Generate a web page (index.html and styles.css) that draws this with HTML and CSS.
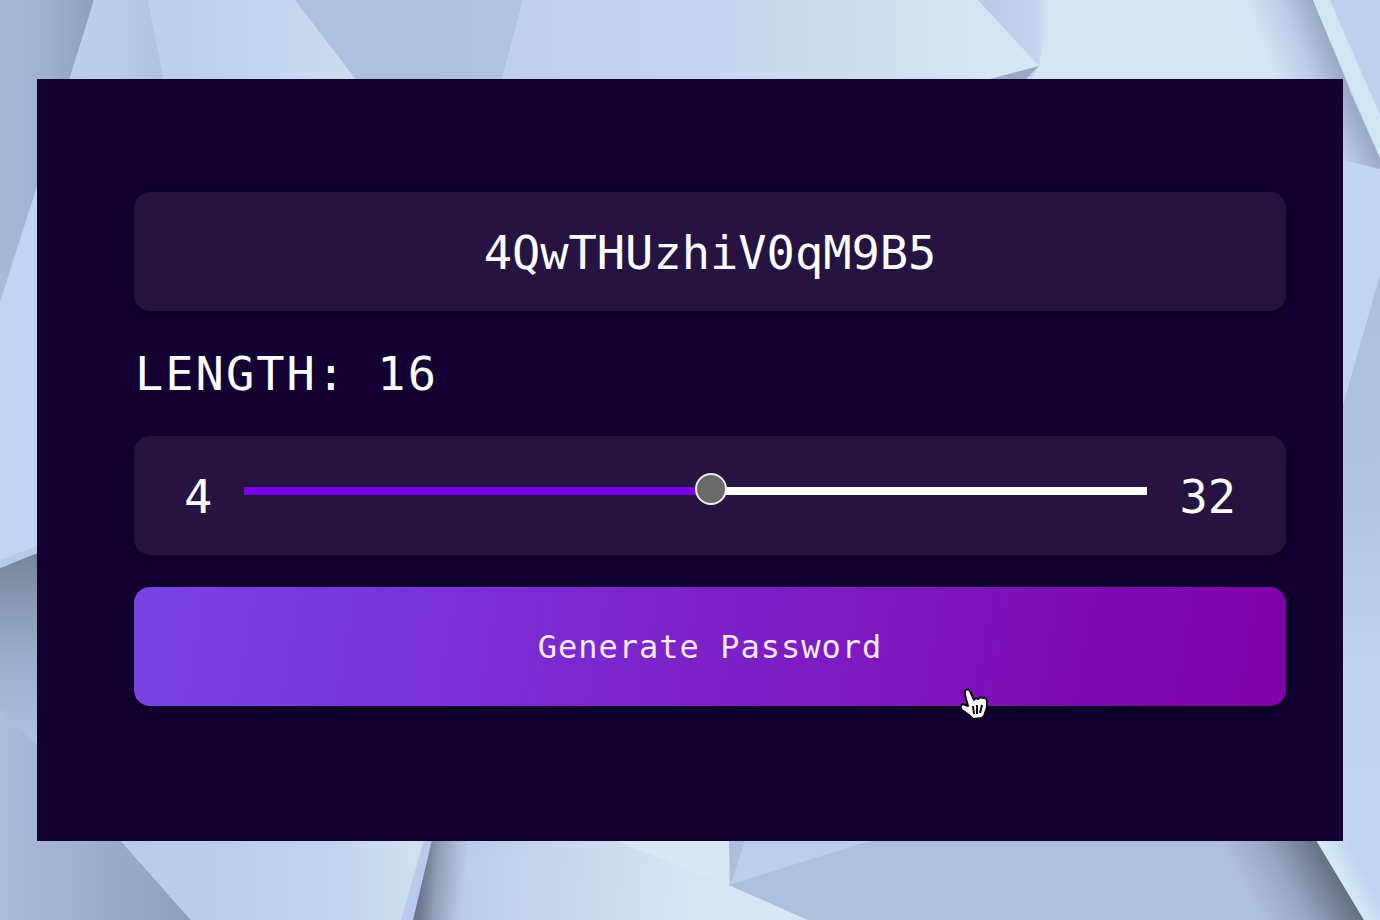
FILE: index.html
```html
<!DOCTYPE html>
<html lang="en">
<head>
<meta charset="utf-8">
<meta name="viewport" content="width=device-width, initial-scale=1">
<title>Password Generator</title>
<link rel="stylesheet" href="styles.css">
</head>
<body>
<svg class="backdrop" viewBox="0 0 1380 920" preserveAspectRatio="none" aria-hidden="true">
  <defs>
    <linearGradient id="slateLeft" gradientUnits="userSpaceOnUse" x1="0" y1="0" x2="94" y2="0"><stop offset="0" stop-color="#a9bad9"/><stop offset=".5" stop-color="#9fb0cd"/><stop offset="1" stop-color="#8e9fb8"/></linearGradient>
    <linearGradient id="facetA" gradientUnits="userSpaceOnUse" x1="80" y1="0" x2="165" y2="0"><stop offset="0" stop-color="#bdcdf0"/><stop offset=".4" stop-color="#bccceb"/><stop offset="1" stop-color="#afc0df"/></linearGradient>
    <linearGradient id="facetB" gradientUnits="userSpaceOnUse" x1="150" y1="0" x2="350" y2="0"><stop offset="0" stop-color="#bccdee"/><stop offset=".5" stop-color="#c3d4f0"/><stop offset="1" stop-color="#cbddef"/></linearGradient>
    <linearGradient id="facetC" gradientUnits="userSpaceOnUse" x1="505" y1="0" x2="1030" y2="0"><stop offset="0" stop-color="#bfcfee"/><stop offset=".4" stop-color="#c6d6f0"/><stop offset=".6" stop-color="#cbdded"/><stop offset="1" stop-color="#d6e8f5"/></linearGradient>
    <linearGradient id="facetG" gradientUnits="userSpaceOnUse" x1="400" y1="0" x2="500" y2="0"><stop offset="0" stop-color="#aebedd"/><stop offset="1" stop-color="#afc2df"/></linearGradient>
    <linearGradient id="facetD" gradientUnits="userSpaceOnUse" x1="978" y1="0" x2="1050" y2="0"><stop offset="0" stop-color="#b8c8e6"/><stop offset=".8" stop-color="#c5d5f0"/><stop offset="1" stop-color="#d3e5f3"/></linearGradient>
    <linearGradient id="shadeTop" gradientUnits="userSpaceOnUse" x1="1266" y1="54" x2="1333" y2="28"><stop offset="0" stop-color="#d3e5f3"/><stop offset=".45" stop-color="#bdcdea"/><stop offset="1" stop-color="#929fba"/></linearGradient>
    <linearGradient id="shadeRight" gradientUnits="userSpaceOnUse" x1="1335" y1="145" x2="1372" y2="128"><stop offset="0" stop-color="#bdcdee"/><stop offset="1" stop-color="#94a3be"/></linearGradient>
    <linearGradient id="rightLow" x1="0" y1="0" x2="0" y2="1"><stop offset="0" stop-color="#acbddd"/><stop offset=".35" stop-color="#b0c1e0"/><stop offset=".7" stop-color="#c2d3f1"/><stop offset="1" stop-color="#c2d4f2"/></linearGradient>
    <linearGradient id="leftShade" x1="0" y1="0" x2="0" y2="1"><stop offset="0" stop-color="#76859a"/><stop offset=".5" stop-color="#99abc8"/><stop offset="1" stop-color="#b0c3e6"/></linearGradient>
    <linearGradient id="slateLow" gradientUnits="userSpaceOnUse" x1="0" y1="0" x2="190" y2="0"><stop offset="0" stop-color="#abbcdc"/><stop offset="1" stop-color="#8fa0bb"/></linearGradient>
    <linearGradient id="facetE" gradientUnits="userSpaceOnUse" x1="120" y1="0" x2="425" y2="0"><stop offset="0" stop-color="#b8c9ea"/><stop offset=".7" stop-color="#c3d4f0"/><stop offset="1" stop-color="#d0e3ef"/></linearGradient>
    <linearGradient id="facetF" gradientUnits="userSpaceOnUse" x1="422" y1="880" x2="730" y2="910"><stop offset="0" stop-color="#6c788f"/><stop offset=".05" stop-color="#93a1ba"/><stop offset=".14" stop-color="#bccdea"/><stop offset=".5" stop-color="#c9daef"/><stop offset="1" stop-color="#d6e8f5"/></linearGradient>
    <linearGradient id="shadeLow" gradientUnits="userSpaceOnUse" x1="1263" y1="920" x2="1346" y2="872"><stop offset="0" stop-color="#aebedd"/><stop offset=".4" stop-color="#98a8c4"/><stop offset="1" stop-color="#596476"/></linearGradient>
    <linearGradient id="glowLow" gradientUnits="userSpaceOnUse" x1="1330" y1="862" x2="1352" y2="850"><stop offset="0" stop-color="#d7eaf6"/><stop offset="1" stop-color="#c2d4f2"/></linearGradient>
  </defs>
  <rect width="1380" height="920" fill="#c2d4f2"/>
  <path d="M0 0H94L37 186 0 302Z" fill="url(#slateLeft)"/>
  <path d="M94 0H148L166 90H66Z" fill="url(#facetA)"/>
  <path d="M148 0H295L364 90H166Z" fill="url(#facetB)"/>
  <path d="M295 0H523L499 90H364Z" fill="url(#facetG)"/>
  <path d="M523 0H978L1039 66 1000 90H499Z" fill="url(#facetC)"/>
  <path d="M978 0H1330V90H1026L1039 66Z" fill="#d3e5f3"/>
  <path d="M978 0H1052L1039 66Z" fill="url(#facetD)"/>
  <path d="M1039 66L990 79H1026Z" fill="#9ba9c5"/>
  <path d="M1200 0H1313L1350 90H1200Z" fill="url(#shadeTop)"/>
  <path d="M1343 76L1380 158V169L1343 160Z" fill="url(#shadeRight)"/>
  <path d="M1329 0H1380V115Z" fill="#bfcfee"/>
  <path d="M1313 0H1330L1380 115V158Z" fill="#d1e6f3"/>
  <path d="M1380 275V840H1343V405Z" fill="url(#rightLow)"/>
  <path d="M0 568L37 553V750L0 710Z" fill="url(#leftShade)"/>
  <path d="M0 560L37 546V553L0 568Z" fill="#b7c9e9"/>
  <path d="M0 710L37 745V840H120L191 920H0Z" fill="url(#slateLow)"/>
  <path d="M120 840H432L413 920H191Z" fill="url(#facetE)"/>
  <path d="M424 840H432L413 920H401Z" fill="#b9caec"/>
  <path d="M432 840H730V886L808 920H413Z" fill="url(#facetF)"/>
  <path d="M614 840H730V886Z" fill="#d5e8f4"/>
  <path d="M729 840H870L729 886Z" fill="#bdceed"/>
  <path d="M729 840H745L731 884Z" fill="#adbddc"/>
  <path d="M729 885L872 840H1330L1380 920H808Z" fill="#aebedd"/>
  <path d="M1180 840H1316L1364 920H1180Z" fill="url(#shadeLow)"/>
  <path d="M1316 840H1350L1380 895V920H1364Z" fill="url(#glowLow)"/>
</svg>
<main class="page">
  <form class="panel">
    <output class="card password" for="length">4QwTHUzhiV0qM9B5</output>
    <label class="length-label" for="length">LENGTH: 16</label>
    <div class="card slider">
      <span class="bound">4</span>
      <input class="range" id="length" type="range" min="4" max="32" step="0.5" value="18.5" style="--fill: 52%">
      <span class="bound">32</span>
    </div>
    <div class="action">
      <button class="card generate" type="button">Generate Password</button>
      <svg class="pointer" viewBox="0 0 30 33" aria-hidden="true">
        <path d="M6 3Q8 0 11 3L15 12Q17 9 19 11Q22 8 24 10Q27 9 28 13L28 19 25 28 23 30 14 31 10 27 3 22Q0 18 4 16L9 18 6 7Z" fill="#fff" stroke="#0b0713" stroke-width="2" stroke-linejoin="round"/>
        <path d="M14 18L15 26M18 17V26M23 17L21 25" stroke="#0b0713" stroke-width="2" fill="none"/>
      </svg>
    </div>
  </form>
</main>
</body>
</html>
```
FILE: styles.css
```css
* {
  box-sizing: border-box;
}

body {
  margin: 0;
  color: #fff;
  font-family: "DejaVu Sans Mono", monospace;
  font-size: 47px;
  line-height: 61px;
}

.backdrop {
  position: fixed;
  inset: 0;
  z-index: -1;
  width: 100%;
  height: 100%;
}

.page {
  display: grid;
  align-items: center;
  min-height: 100vh;
  padding: 32px 37px;
}

.panel {
  display: flex;
  flex-direction: column;
  gap: 32px;
  padding: 113px 57px 135px 97px;
  background: #120032;
}

.card {
  display: flex;
  align-items: center;
  justify-content: center;
  width: 100%;
  padding: 30px 50px 28px;
  border-radius: 16px;
  background: #251442;
  box-shadow: 0 3px 8px #0a001c;
}

.password {
  overflow-wrap: anywhere;
}

.length-label {
  padding-left: 1px;
  letter-spacing: 2px;
}

.slider {
  gap: 32px;
}

.range {
  flex: 1;
  min-width: 0;
  height: 32px;
  margin: 0 0 12px;
  appearance: none;
  background: none;
}

.range::-webkit-slider-runnable-track {
  height: 8px;
  background: linear-gradient(to right, #7500e5 var(--fill), #fff var(--fill));
}

.range::-webkit-slider-thumb {
  appearance: none;
  width: 32px;
  height: 32px;
  margin-top: -14px;
  border: 2px solid #eee;
  border-radius: 50%;
  background: #696969;
}

.action {
  position: relative;
}

.generate {
  border: 0;
  color: #f6e9ff;
  background: linear-gradient(100deg, #7843e6, #8000a8);
  font-family: inherit;
  font-size: 32px;
  line-height: 61px;
  letter-spacing: 1px;
}

.pointer {
  position: absolute;
  top: 101px;
  left: 72%;
  width: 30px;
  height: 33px;
  margin-left: -4px;
}
```
